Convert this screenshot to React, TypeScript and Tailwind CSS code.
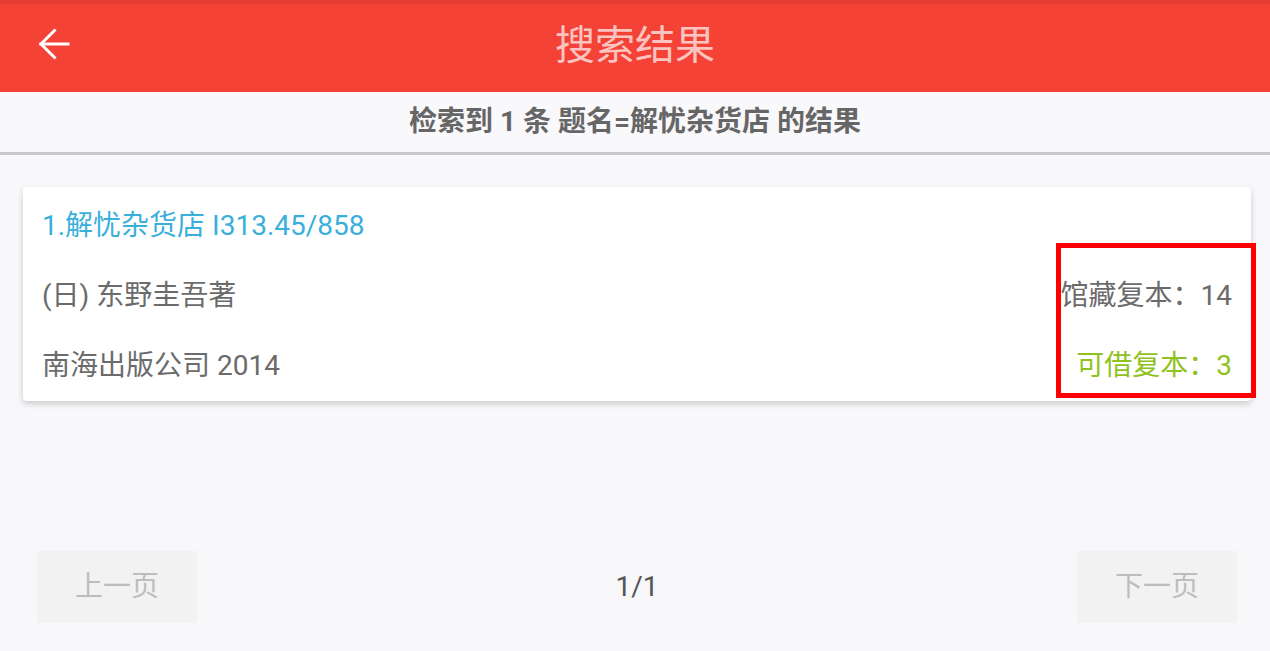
import React from 'react';

const font = { fontFamily: 'Roboto, "Noto Sans CJK SC", sans-serif' };

function BackArrow() {
  return (
    <svg width="32" height="32" viewBox="0 0 32 32" fill="none" stroke="white" strokeWidth="3" strokeLinecap="square">
      <path d="M30 16H3" />
      <path d="M16.5 2.5 3 16l13.5 13.5" />
    </svg>
  );
}

export default function App() {
  return (
    <div className="w-[1270px] h-[651px] bg-[#f8f8fa] flex flex-col overflow-hidden" style={font}>
      {/* header */}
      <header className="relative h-[92px] bg-[#f44336] flex items-center justify-center shrink-0">
        <div className="absolute top-0 left-0 right-0 h-[4px] bg-[#e63b33]" />
        <button className="absolute left-[38px] top-[28px]">
          <BackArrow />
        </button>
        <h1 className="text-[40px] text-white/70 leading-none">搜索结果</h1>
      </header>

      {/* summary */}
      <div className="h-[63px] bg-[#f9f8fb] border-b-[3px] border-[#c9c8cc] flex items-center justify-center shrink-0">
        <p className="text-[28px] font-bold text-[#666666]">检索到 1 条 题名=解忧杂货店 的结果</p>
      </div>

      {/* result card */}
      <div className="relative ml-[23px] mr-[19px] mt-[32px] bg-white rounded-[4px] shadow-[0_3px_6px_rgba(0,0,0,0.18)] px-[19px] pt-[4px]">
        <div className="h-[70px] flex items-center">
          <span className="text-[28px] text-[#3aafdc]">1.解忧杂货店 I313.45/858</span>
        </div>
        <div className="h-[70px] flex items-center justify-between">
          <span className="text-[28px] text-[#6b6b6b]">(日) 东野圭吾著</span>
          <span className="text-[28px] text-[#6b6b6b]">馆藏复本：14</span>
        </div>
        <div className="h-[70px] flex items-center justify-between">
          <span className="text-[28px] text-[#6b6b6b]">南海出版公司 2014</span>
          <span className="text-[28px] text-[#8fc21f]">可借复本：3</span>
        </div>
        <div className="absolute right-[-5px] top-[56px] w-[200px] h-[155px] border-[5px] border-[#ff0000]" />
      </div>

      {/* pagination */}
      <div className="mt-[150px] pl-[37px] pr-[33px] flex items-center justify-between">
        <button className="w-[160px] h-[72px] bg-[#f2f2f2] text-[28px] text-[#bdbdbd]">上一页</button>
        <span className="text-[28px] text-[#555555]">1/1</span>
        <button className="w-[160px] h-[72px] bg-[#f2f2f2] text-[28px] text-[#bdbdbd]">下一页</button>
      </div>
    </div>
  );
}
